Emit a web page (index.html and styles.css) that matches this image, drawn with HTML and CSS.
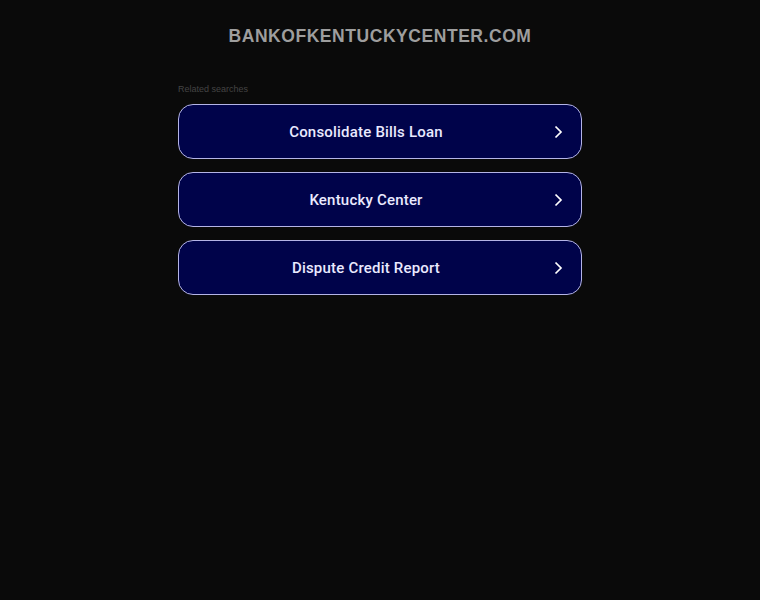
FILE: index.html
```html
<!DOCTYPE html>
<html>
<head>
<meta charset="utf-8">
<link rel="stylesheet" href="styles.css">
</head>
<body>
<div class="page">
  <h1 class="domain">BANKOFKENTUCKYCENTER.COM</h1>
  <div class="related">
    <div class="label">Related searches</div>
    <a class="item" href="#"><span class="text">Consolidate Bills Loan</span><svg class="chev" viewBox="0 0 10 16" width="10" height="16"><path d="M2.5 2.5 L8 8 L2.5 13.5" fill="none" stroke="#fff" stroke-width="1.7"/></svg></a>
    <a class="item" href="#"><span class="text">Kentucky Center</span><svg class="chev" viewBox="0 0 10 16" width="10" height="16"><path d="M2.5 2.5 L8 8 L2.5 13.5" fill="none" stroke="#fff" stroke-width="1.7"/></svg></a>
    <a class="item" href="#"><span class="text">Dispute Credit Report</span><svg class="chev" viewBox="0 0 10 16" width="10" height="16"><path d="M2.5 2.5 L8 8 L2.5 13.5" fill="none" stroke="#fff" stroke-width="1.7"/></svg></a>
  </div>
</div>
</body>
</html>
```
FILE: styles.css
```css
html, body {
  margin: 0;
  padding: 0;
  background: #0a0a0a;
  font-family: "Liberation Sans", Arial, sans-serif;
}
.page {
  display: flex;
  flex-direction: column;
  align-items: center;
}
.domain {
  margin: 25px 0 0;
  font-size: 17.5px;
  font-weight: bold;
  letter-spacing: 0.55px;
  color: #9e9e9e;
  line-height: 22px;
}
.related {
  width: 404px;
  margin-top: 37px;
  display: flex;
  flex-direction: column;
  gap: 13px;
}
.label {
  font-size: 9px;
  color: #444;
  line-height: 11px;
  margin-bottom: -4px;
}
.item {
  box-sizing: border-box;
  height: 55px;
  border: 1px solid #b4b4e6;
  border-radius: 15px;
  background: #00034a;
  display: flex;
  align-items: center;
  justify-content: center;
  position: relative;
  text-decoration: none;
}
.text {
  color: #eaeaff;
  font-family: Roboto, "Liberation Sans", sans-serif;
  font-size: 15px;
  font-weight: 500;
  letter-spacing: 0.2px;
  margin-right: 28px;
}
.chev {
  position: absolute;
  right: 18px;
  top: 19px;
}
```
